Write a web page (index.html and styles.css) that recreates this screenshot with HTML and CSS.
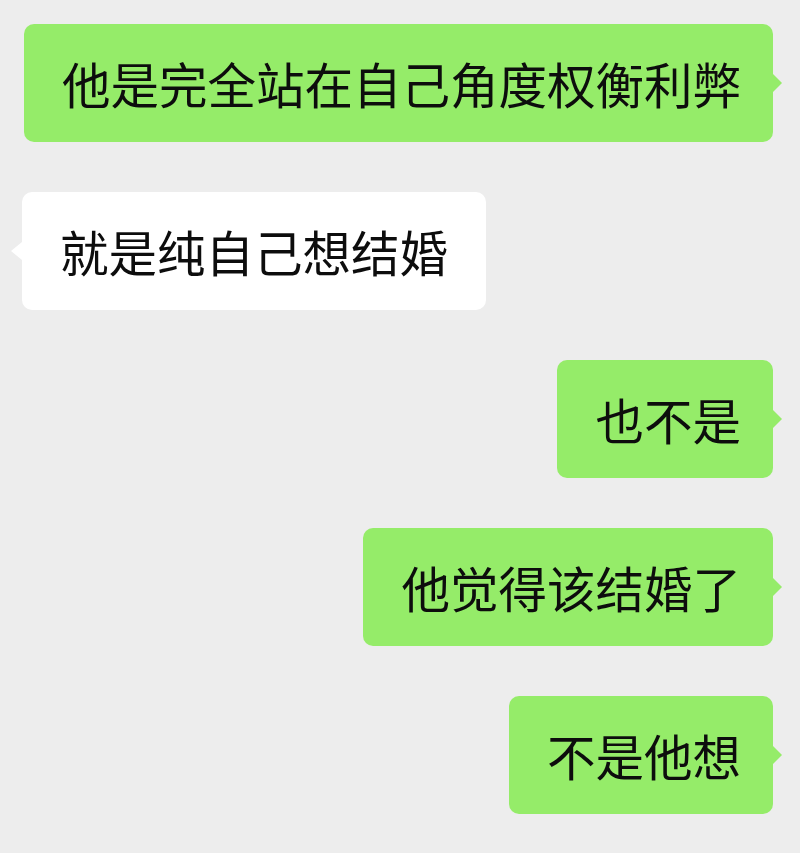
FILE: index.html
```html
<!DOCTYPE html>
<html lang="zh-CN">
<head>
  <meta charset="UTF-8">
  <meta name="viewport" content="width=device-width, initial-scale=1.0">
  <title>聊天记录</title>
  <link rel="stylesheet" href="styles.css">
</head>
<body>

  <!-- 聊天内容 -->
  <div class="chat">
    <div class="row mine">
      <div class="bubble">他是完全站在自己角度权衡利弊</div>
    </div>
    <div class="row theirs">
      <div class="bubble">就是纯自己想结婚</div>
    </div>
    <div class="row mine">
      <div class="bubble">也不是</div>
    </div>
    <div class="row mine">
      <div class="bubble">他觉得该结婚了</div>
    </div>
    <div class="row mine">
      <div class="bubble">不是他想</div>
    </div>
  </div>

</body>
</html>
```

FILE: styles.css
```css
/* 基本设置 */
body {
  margin: 0;
  padding: 0;
  background-color: #ededed;
  font-family: "Noto Sans CJK SC", "Noto Sans", sans-serif;
  color: #0d0d0d;
  min-height: 100vh;
}

/* 聊天列表 */
.chat {
  display: flex;
  flex-direction: column;
  gap: 50px;
  padding: 24px 27px 0 22px;
}

.row {
  display: flex;
}

.row.mine { justify-content: flex-end; }
.row.theirs { justify-content: flex-start; }

/* 气泡 */
.bubble {
  position: relative;
  font-size: 48.5px;
  line-height: 58px;
  padding: 30px 38px;
  border-radius: 10px;
  white-space: nowrap;
}

.mine .bubble {
  background-color: #95ec69;
  padding-right: 32px;
}

.theirs .bubble {
  background-color: #ffffff;
}

/* 小尖角 */
.bubble::after {
  content: "";
  position: absolute;
  top: 50%;
  transform: translateY(-50%);
  border-top: 9px solid transparent;
  border-bottom: 9px solid transparent;
}

.mine .bubble::after {
  right: -9px;
  border-left: 9px solid #95ec69;
}

.theirs .bubble::after {
  left: -11px;
  border-right: 11px solid #ffffff;
}
```
